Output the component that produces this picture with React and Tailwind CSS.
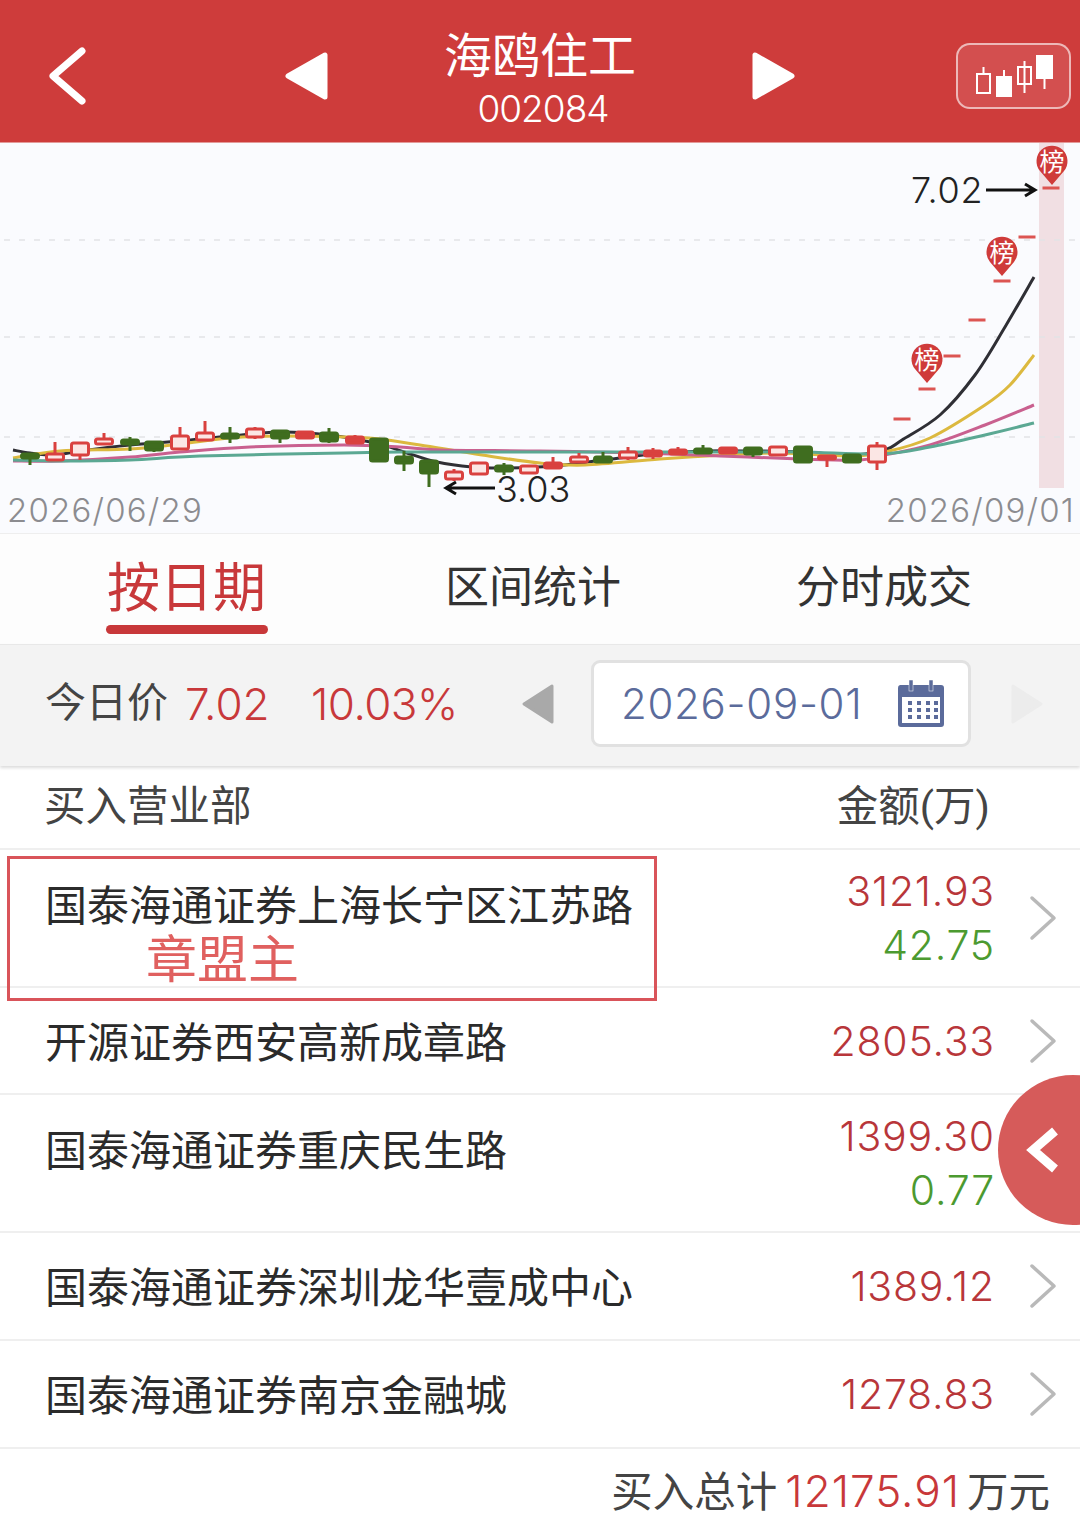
const sans = "font-['Roboto','Noto_Sans_CJK_SC',sans-serif]";
const nums = "font-['Inter',sans-serif] font-light";

// x, bodyTop, bodyBottom, wickTop, wickBottom, kind (r hollow red, f solid red, g green)
const candles = [
  [30, 454, 458, 454, 465, "g"],
  [55, 454, 460, 442, 460, "r"],
  [80, 443, 455, 443, 460, "r"],
  [104, 439, 444, 433, 444, "r"],
  [130, 440, 444, 437, 451, "g"],
  [154, 442, 450, 442, 452, "g"],
  [180, 436, 449, 427, 449, "r"],
  [205, 433, 440, 421, 440, "r"],
  [230, 434, 438, 427, 443, "g"],
  [255, 429, 437, 427, 439, "r"],
  [280, 431, 438, 431, 443, "g"],
  [305, 432, 438, 432, 438, "f"],
  [329, 433, 441, 428, 443, "g"],
  [355, 437, 443, 435, 443, "f"],
  [379, 439, 461, 439, 461, "g"],
  [404, 457, 463, 451, 471, "g"],
  [429, 461, 473, 461, 487, "g"],
  [454, 472, 479, 469, 481, "r"],
  [479, 463, 474, 463, 474, "r"],
  [504, 466, 471, 463, 475, "g"],
  [529, 466, 473, 466, 473, "r"],
  [553, 463, 468, 457, 468, "f"],
  [579, 457, 462, 453, 462, "r"],
  [603, 457, 462, 452, 462, "g"],
  [628, 452, 458, 447, 460, "r"],
  [653, 451, 456, 448, 459, "f"],
  [678, 450, 454, 447, 454, "f"],
  [703, 449, 453, 445, 453, "g"],
  [728, 448, 453, 447, 453, "f"],
  [753, 448, 454, 447, 457, "g"],
  [778, 447, 455, 447, 455, "r"],
  [803, 447, 462, 447, 462, "g"],
  [827, 456, 459, 456, 467, "f"],
  [852, 455, 462, 455, 462, "g"],
  [877, 446, 462, 442, 470, "r"],
];

const dashes = [
  [902, 419],
  [927, 389],
  [952, 356],
  [977, 320],
  [1002, 281],
  [1027, 237],
  [1051, 188],
];

const maLines = [
  {
    color: "#2f2f35",
    points: [[13, 450], [30, 453], [55, 455], [80, 451], [130, 445], [180, 441], [230, 436], [280, 432], [329, 435], [379, 444], [404, 452], [437, 462], [472, 467], [504, 468], [553, 466], [603, 460], [653, 454], [703, 451], [753, 451], [803, 452], [852, 455], [885, 450], [902, 440], [940, 415], [975, 375], [1005, 327], [1034, 277]],
  },
  {
    color: "#dcb93f",
    points: [[13, 458], [60, 451], [130, 449], [180, 444], [230, 438], [280, 436], [344, 437], [379, 439], [420, 445], [482, 455], [540, 463], [585, 465], [660, 459], [726, 455], [780, 453], [850, 456], [885, 452], [930, 438], [985, 405], [1010, 385], [1034, 355]],
  },
  {
    color: "#c9608f",
    points: [[13, 461], [60, 461], [130, 457], [180, 452], [250, 447], [344, 445], [400, 447], [440, 450], [540, 451], [640, 453], [720, 456], [800, 459], [860, 460], [885, 455], [930, 445], [985, 425], [1034, 405]],
  },
  {
    color: "#5ba893",
    points: [[13, 460], [60, 461], [130, 460], [200, 456], [344, 453], [400, 452], [540, 452], [620, 452], [720, 452], [800, 452], [880, 454], [930, 447], [985, 435], [1034, 423]],
  },
];

// catmull-rom through the points so the averages read as curves
function smoothPath(points) {
  let d = `M${points[0][0]} ${points[0][1]}`;
  for (let i = 0; i < points.length - 1; i++) {
    const p0 = points[i - 1] || points[i];
    const p1 = points[i];
    const p2 = points[i + 1];
    const p3 = points[i + 2] || p2;
    const c1x = p1[0] + (p2[0] - p0[0]) / 6;
    const c1y = p1[1] + (p2[1] - p0[1]) / 6;
    const c2x = p2[0] - (p3[0] - p1[0]) / 6;
    const c2y = p2[1] - (p3[1] - p1[1]) / 6;
    d += ` C${c1x} ${c1y} ${c2x} ${c2y} ${p2[0]} ${p2[1]}`;
  }
  return d;
}

function Candle({ data }) {
  const [x, top, bottom, wickTop, wickBottom, kind] = data;
  const color = kind === "g" ? "#3f6d1f" : "#d9413f";
  const fill = kind === "r" ? "#fbe6e4" : color;
  return (
    <g>
      <line x1={x} x2={x} y1={wickTop} y2={wickBottom} stroke={color} strokeWidth="3" />
      <rect x={x - 8.5} y={top} width="17" height={bottom - top} rx="2" fill={fill} stroke={color} strokeWidth="3" />
    </g>
  );
}

function Pin({ x, y }) {
  return (
    <g>
      <path
        d={`M${x} ${y + 23} L${x - 12} ${y + 9} A15.5 15.5 0 1 1 ${x + 12} ${y + 9} Z`}
        fill="#cf3b3a"
      />
      <text x={x} y={y + 9} textAnchor="middle" fontSize="25" fill="#fff" fontFamily="Noto Sans CJK SC, sans-serif">
        榜
      </text>
    </g>
  );
}

function Chart() {
  return (
    <div className="h-[390px] bg-[#fafbfe] flex flex-col">
      <svg width="1080" height="345" viewBox="0 143 1080 345" className="block overflow-visible">
        <rect x="1039" y="143" width="25" height="345" fill="#f1dfe3" />
        {[240, 337, 437].map((y) => (
          <line key={y} x1="4" x2="1080" y1={y} y2={y} stroke="#e2e3e6" strokeWidth="1.5" strokeDasharray="6 9" />
        ))}
        {maLines.map((line) => (
          <path key={line.color} d={smoothPath(line.points)} fill="none" stroke={line.color} strokeWidth="3" />
        ))}
        {candles.map((c) => (
          <Candle key={c[0]} data={c} />
        ))}
        {dashes.map(([x, y]) => (
          <rect key={x} x={x - 8.5} y={y - 1.5} width="17" height="3" fill="#dc5552" />
        ))}
        <Pin x={927} y={360} />
        <Pin x={1002} y={253} />
        <Pin x={1052} y={162} />
        <text x="911" y="203" fontSize="36" letterSpacing="0.8" fill="#222" fontFamily="Inter, sans-serif" fontWeight="300">7.02</text>
        <path d="M986 190H1034M1025 184l10 6-10 6" fill="none" stroke="#111" strokeWidth="3" />
        <text x="496" y="502" fontSize="36" fill="#222" fontFamily="Inter, sans-serif" fontWeight="300">3.03</text>
        <path d="M495 488H446M456 482l-10 6 10 6" fill="none" stroke="#111" strokeWidth="3" />
      </svg>
      <div className={`flex justify-between pl-[7px] pr-[5px] text-[33px] leading-[44px] tracking-[1.2px] text-[#8c8c90] ${nums}`}>
        <span>2026/06/29</span>
        <span>2026/09/01</span>
      </div>
    </div>
  );
}

function KlineIcon() {
  return (
    <svg width="115" height="66" viewBox="955 42 115 66" fill="none" stroke="#fff" strokeWidth="2">
      <rect x="976" y="73" width="13" height="19" />
      <path d="M982.5 66V73" />
      <rect x="996" y="76" width="14" height="19" fill="#fff" />
      <path d="M1003 69V76" />
      <rect x="1017" y="66" width="13" height="17" />
      <path d="M1023.5 60V92" />
      <rect x="1036" y="55" width="15" height="22" fill="#fff" />
      <path d="M1043.5 77V88" />
    </svg>
  );
}

function Header() {
  return (
    <header className="h-[143px] bg-[#ce3c3b] border-b border-[#e39a99] flex items-center pl-[48px] pt-[9px] text-white">
      <svg width="38" height="58" viewBox="0 0 38 58" fill="none" stroke="#fff" strokeWidth="7" strokeLinecap="round" strokeLinejoin="round">
        <path d="M34 4L5 29L34 54" />
      </svg>
      <svg width="43" height="50" viewBox="0 0 43 50" fill="#fff" stroke="#fff" strokeWidth="5" strokeLinejoin="round" className="ml-[199px]">
        <path d="M40 4V46L3 25Z" />
      </svg>
      <div className={`w-[424px] flex flex-col items-center pt-[11px] ${sans}`}>
        <span className="text-[48px] leading-[56px]">海鸥住工</span>
        <span className={`text-[37px] leading-[48px] tracking-[-1px] pl-[6px] ${nums}`}>002084</span>
      </div>
      <svg width="43" height="50" viewBox="0 0 43 50" fill="#fff" stroke="#fff" strokeWidth="5" strokeLinejoin="round">
        <path d="M3 4V46L40 25Z" />
      </svg>
      <div className="ml-[161px] w-[115px] h-[66px] rounded-[14px] border-2 border-white/60 bg-white/10 relative overflow-hidden flex items-center justify-center">
        <div className="shrink-0">
          <KlineIcon />
        </div>
      </div>
    </header>
  );
}

function Tabs() {
  return (
    <nav className={`h-[111px] bg-[#fdfdfd] border-t border-[#eeeeee] flex ${sans}`}>
      <div className="w-[373px] flex flex-col items-center pt-[25px]">
        <span className="text-[53px] leading-[60px] text-[#c8383a]">按日期</span>
        <span className="w-[162px] h-[9px] rounded-full bg-[#c8383a] mt-[6px]" />
      </div>
      <div className="w-[320px] text-center pt-[27px] text-[44px] leading-[54px] text-[#333]">区间统计</div>
      <div className="w-[382px] text-center pt-[27px] text-[44px] leading-[54px] text-[#333]">分时成交</div>
    </nav>
  );
}

function CalendarIcon() {
  return (
    <svg width="48" height="48" viewBox="0 0 48 48" fill="#5b6b9b">
      <path d="M3 5H44a3 3 0 0 1 3 3V44a3 3 0 0 1-3 3H4a3 3 0 0 1-3-3V8a3 3 0 0 1 2-3Z" />
      <rect x="5" y="17" width="38" height="26" fill="#fff" />
      <rect x="12" y="0" width="4" height="11" fill="#5b6b9b" stroke="#fff" strokeWidth="0.5" />
      <rect x="32" y="0" width="4" height="11" fill="#5b6b9b" stroke="#fff" strokeWidth="0.5" />
      {[21, 28, 35].map((y) =>
        [11, 20, 29, 37].map((x) => <rect key={`${x}-${y}`} x={x} y={y} width="4" height="4" />),
      )}
    </svg>
  );
}

function DateBar() {
  return (
    <section className={`h-[122px] bg-[#f3f3f3] border-t border-[#e8e8e8] shadow-[0_2px_3px_rgba(0,0,0,0.14)] relative flex items-center pl-[45px] pb-[4px] ${sans}`}>
      <span className="text-[41px] text-[#444] w-[140px]">今日价</span>
      <span className={`text-[44px] text-[#c8383a] w-[126px] ${nums}`}>7.02</span>
      <span className={`text-[44px] tracking-[-0.5px] text-[#c8383a] w-[211px] ${nums}`}>10.03%</span>
      <svg width="32" height="42" viewBox="0 0 32 42" fill="#a9a9a9" stroke="#a9a9a9" strokeWidth="3" strokeLinejoin="round">
        <path d="M30 3V39L2 21Z" />
      </svg>
      <div className="ml-[37px] w-[380px] h-[87px] rounded-[9px] bg-white border-[3px] border-[#e1e1e1] flex items-center pl-[27px] pr-[23px] justify-between">
        <span className={`text-[42px] tracking-[0.7px] text-[#5b6b9b] ${nums}`}>2026-09-01</span>
        <CalendarIcon />
      </div>
      <svg width="32" height="42" viewBox="0 0 32 42" fill="#ececec" stroke="#ececec" strokeWidth="3" strokeLinejoin="round" className="ml-[40px]">
        <path d="M2 3V39L30 21Z" />
      </svg>
    </section>
  );
}

function RowChevron() {
  return (
    <svg width="28" height="46" viewBox="0 0 28 46" fill="none" stroke="#b9b9b9" strokeWidth="3.5" strokeLinecap="round" strokeLinejoin="round" className="shrink-0 ml-[34px] mr-[23px]">
      <path d="M3 3L25 23L3 43" />
    </svg>
  );
}

function Row({ name, buy, sell, height }) {
  return (
    <div className={`${height} border-b-2 border-[#efefef] flex items-center pl-[45px]`}>
      <span className={`flex-1 text-[42px] leading-[56px] text-[#2b2b2b] ${sell ? "pb-[23px]" : "pt-[6px]"}`}>{name}</span>
      <div className={`flex flex-col items-end text-[41px] leading-[54px] tracking-[0.8px] ${nums}`}>
        <span className="text-[#b8363a]">{buy}</span>
        {sell && <span className="text-[#4c9a30]">{sell}</span>}
      </div>
      <RowChevron />
    </div>
  );
}

export default function App() {
  return (
    <div className={`w-[1080px] h-[1520px] bg-white relative overflow-hidden ${sans}`}>
      <Header />
      <Chart />
      <Tabs />
      <DateBar />

      <div className="h-[84px] border-b-2 border-[#efefef] flex items-center justify-between pl-[44px] pr-[90px] text-[41.5px] text-[#444]">
        <span>买入营业部</span>
        <span>金额(万)</span>
      </div>

      <Row name="国泰海通证券上海长宁区江苏路" buy="3121.93" sell="42.75" height="h-[138px]" />
      <Row name="开源证券西安高新成章路" buy="2805.33" height="h-[107px]" />
      <Row name="国泰海通证券重庆民生路" buy="1399.30" sell="0.77" height="h-[138px]" />
      <Row name="国泰海通证券深圳龙华壹成中心" buy="1389.12" height="h-[108px]" />
      <Row name="国泰海通证券南京金融城" buy="1278.83" height="h-[108px]" />

      <div className="flex items-baseline justify-end pr-[30px] pt-[9px] text-[41.5px] text-[#444]">
        <span>买入总计</span>
        <span className={`text-[44px] text-[#c8383a] ml-[8px] mr-[7px] tracking-[1px] ${nums}`}>12175.91</span>
        <span>万元</span>
      </div>

      {/* hand drawn note over the first row */}
      <div className="absolute left-[7px] top-[856px] w-[650px] h-[145px] border-[3px] border-[#d9545a] pointer-events-none">
        <span className="absolute left-[136px] top-[72px] text-[51px] leading-[60px] text-[#e0605f]">章盟主</span>
      </div>

      {/* floating side handle */}
      <div className="absolute left-[998px] top-[1075px] w-[150px] h-[150px] rounded-full bg-[#d65b5a] pl-[28px] flex items-center">
        <svg width="34" height="46" viewBox="0 0 34 46" fill="none" stroke="#fff" strokeWidth="9">
          <path d="M29 4L7 23L29 42" />
        </svg>
      </div>
    </div>
  );
}
